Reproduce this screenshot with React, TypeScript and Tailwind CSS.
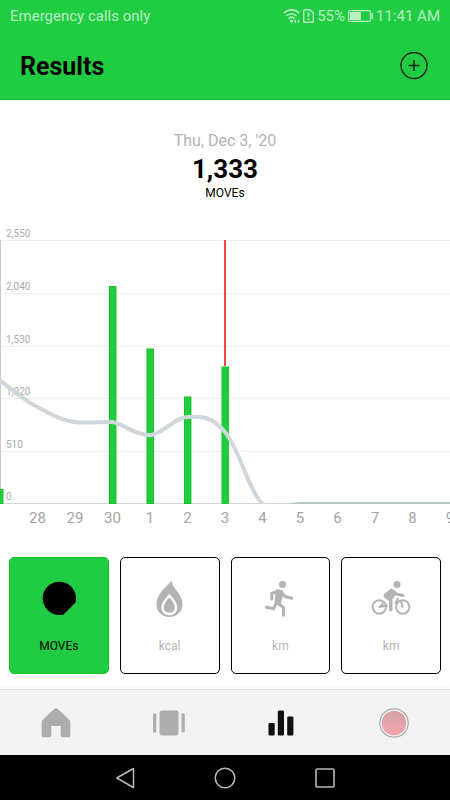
import type { ReactNode } from "react";

const gridLines = [
  { y: 240, label: "2,550" },
  { y: 293, label: "2,040" },
  { y: 346, label: "1,530" },
  { y: 398, label: "1,020" },
  { y: 451, label: "510" },
  { y: 503, label: "0" },
];

const days = ["28", "29", "30", "1", "2", "3", "4", "5", "6", "7", "8", "9"];

const bars = [
  { x: -4, top: 489 },
  { x: 109, top: 286 },
  { x: 146.5, top: 348.5 },
  { x: 184, top: 396.5 },
  { x: 221.5, top: 366.5 },
];

function StatusBar() {
  return (
    <div className="flex h-8 items-center justify-between px-[10px] text-[15px] leading-5 text-[#b9efc2]">
      <span>Emergency calls only</span>
      <div className="flex items-center gap-[3px]">
        <svg width="17" height="16" viewBox="0 0 17 16" fill="none" stroke="currentColor" strokeWidth="1.6">
          <path d="M.8 5.2C5 .7 12 .7 16.2 5.2M3.2 8C6.2 4.9 10.800 4.900 13.800 8M5.500 10.600c1.800-1.700 4.200-1.700 6 0" />
          <circle cx="8.500" cy="13" r="1.500" fill="currentColor" stroke="none" />
          <path d="M11 13.200l1.900-2.200v4.400zM16.700 13.200l-1.900-2.200v4.400z" fill="currentColor" stroke="none" />
        </svg>
        <svg width="11" height="14" viewBox="0 0 11 14" fill="none" stroke="currentColor" strokeWidth="1.400">
          <path d="M1.700.7h5L10.300 4v8.300a1 1 0 0 1-1 1H1.700a1 1 0 0 1-1-1V1.700a1 1 0 0 1 1-1Z" />
          <path d="M5.500 3.400v4.400M5.500 9.200v1.700" strokeWidth="1.800" />
        </svg>
        <span>55%</span>
        <svg width="25" height="12" viewBox="0 0 25 12" fill="none">
          <rect x=".6" y=".6" width="21.800" height="10.800" rx="1" stroke="currentColor" strokeWidth="1.200" />
          <path d="M2 2h11v8H2zM23.500 3H25v6h-1.500z" fill="currentColor" />
        </svg>
        <span>11:41 AM</span>
      </div>
    </div>
  );
}

function ActivityChart() {
  return (
    <svg viewBox="0 220 450 315" className="block w-full" role="img" aria-label="MOVEs per day">
      <defs>
        <clipPath id="plot">
          <rect x="0" y="236" width="450" height="268" />
        </clipPath>
      </defs>
      {gridLines.map((line) => (
        <g key={line.label}>
          <rect x="0" y={line.y} width="450" height="1" fill={line.label === "0" ? "#d4d4d4" : "#f0f0f0"} />
          <text x="6" y={line.y - 3} fontSize="10" fill="#ababab">
            {line.label}
          </text>
        </g>
      ))}
      <rect x="0" y="240" width="1" height="264" fill="#cccccc" />
      {bars.map((bar) => (
        <g key={bar.x}>
          <rect x={bar.x} y={bar.top} width="7.400" height={504 - bar.top} fill="#10c41c" />
          <rect x={bar.x + 1} y={bar.top + 1} width="5.400" height={502 - bar.top} fill="#20cc42" />
        </g>
      ))}
      <rect x="224" y="240" width="2" height="126" fill="#fb4545" />
      <g clipPath="url(#plot)" fill="none" stroke="#ced7db" strokeWidth="4">
        <path d="M-2 379C12 389 25 401 37.500 407C50 414 63 421 78 422.500C91 423 100 421.500 112.500 422C126 425 134 435 150 435.200C164 434 174 417 187.500 417C203 416 212 417 225 432C240 450 247 487 262 503.500C270 508 282 508 293 504.500" />
        <path d="M292 504.500Q296 503.500 303 503.500H450" stroke="#b7c4c6" strokeWidth="3" />
      </g>
      {days.map((day, i) => (
        <text key={day} x={37.5 * (i + 1)} y="522.500" fontSize="15" textAnchor="middle" fill="#a4a4a4">
          {day}
        </text>
      ))}
    </svg>
  );
}

function MetricCard({ label, selected = false, children }: { label: string; selected?: boolean; children: ReactNode }) {
  return (
    <button
      type="button"
      aria-pressed={selected}
      className={
        selected
          ? "flex h-[117px] flex-1 flex-col items-center rounded-[5px] border border-[#10c41c] bg-[#20cc42] pt-5 text-black"
          : "flex h-[117px] flex-1 flex-col items-center rounded-[5px] border border-black bg-white pt-5 text-[#b3b3b3]"
      }
    >
      {children}
      <span className="mt-5 text-xs leading-4">{label}</span>
    </button>
  );
}

function TabButton({ label, children }: { label: string; children: ReactNode }) {
  return (
    <button type="button" aria-label={label} className="flex items-center justify-center">
      {children}
    </button>
  );
}

export default function App() {
  return (
    <div className="flex min-h-screen flex-col bg-white font-[Roboto,'Liberation_Sans',sans-serif]">
      <header className="border-b border-[#10bf27] bg-[#20cc42]">
        <StatusBar />
        <div className="flex h-[67px] items-center justify-between px-5">
          <h1 className="pt-[2px] text-[25px] font-bold leading-8">Results</h1>
          <button type="button" aria-label="Add result" className="mr-[2px]">
            <svg width="28" height="28" viewBox="0 0 28 28" fill="none" stroke="#04200a" strokeWidth="1.400">
              <circle cx="14" cy="13.500" r="13" />
              <path d="M14 8v11M8.500 13.500h11" />
            </svg>
          </button>
        </div>
      </header>

      <main className="flex grow flex-col">
        <section className="flex flex-col items-center pt-[31px] text-center">
          <p className="text-base leading-5 text-[#b3b3b3]">Thu, Dec 3, '20</p>
          <p className="text-[26px] font-bold leading-9">1,333</p>
          <p className="text-xs leading-3">MOVEs</p>
        </section>

        <section className="pt-[21px]">
          <ActivityChart />
        </section>

        <section className="flex gap-[11px] px-[9px] pt-[22px] pb-[15px]">
          <MetricCard label="MOVEs" selected>
            <svg width="40" height="40" viewBox="0 0 40 40" fill="currentColor">
              <path d="M36.500 24.500 24.500 36.500A16.700 16.700 0 1 1 36.500 24.500Z" />
            </svg>
          </MetricCard>
          <MetricCard label="kcal">
            <svg width="40" height="40" viewBox="0 0 40 40" fill="currentColor">
              <path d="M22 2.500C21.500 11.500 32.500 14 32.500 26.500C32.500 34 26.500 39 19.500 39S6.500 34 6.500 26.500C6.500 18 13.500 10.500 22 2.500Z" />
              <path d="M19.300 17.500C22.500 21 26 24.500 26 29.500C26 33.500 23 36 19.300 36S12.500 33.500 12.500 29.500C12.500 24.500 16.500 21 19.300 17.500Z" stroke="white" strokeWidth="2.400" />
            </svg>
          </MetricCard>
          <MetricCard label="km">
            <svg width="40" height="40" viewBox="0 0 40 40" fill="none" stroke="currentColor" strokeWidth="3" strokeLinecap="round" strokeLinejoin="round">
              <circle cx="22.500" cy="6.500" r="3.500" fill="currentColor" stroke="none" />
              <path d="M19 13 11.800 15.300V21M21 14 25 18.500 31.800 20.300" />
              <path d="M16.500 12.500 22 13 21.500 20 19 26.500 15.500 25Z" fill="currentColor" strokeWidth="2" />
              <path d="M16.800 24 13.500 30.800 6.500 29.300M18.500 25.500 23.500 29.500V37.300" />
            </svg>
          </MetricCard>
          <MetricCard label="km">
            <svg width="40" height="40" viewBox="0 0 40 40" fill="none" stroke="currentColor" strokeLinecap="round" strokeLinejoin="round">
              <circle cx="26" cy="6.500" r="3.500" fill="currentColor" stroke="none" />
              <circle cx="8.300" cy="29" r="6.700" strokeWidth="1.900" />
              <circle cx="31.700" cy="29" r="6.700" strokeWidth="1.900" />
              <path d="M20.500 11.500 13.500 17 16 20 21 20.500 24 16Z" fill="currentColor" strokeWidth="2" />
              <path d="M21 12.500 26 16.300 32 17.500" strokeWidth="3" />
              <path d="M14.500 18.500 19.800 22.500V31.800" strokeWidth="3.400" />
              <path d="M13 24.500 8.500 29 16 27.500M24.500 25 27 20.500M30 23l1.500 6" strokeWidth="2" />
            </svg>
          </MetricCard>
        </section>
      </main>

      <nav aria-label="Main" className="grid h-[66px] grid-cols-4 border-t border-[#e2e2e2] bg-[#f3f3f3] text-[#adadad] shadow-[0_-1px_4px_rgba(0,0,0,0.05)]">
        <TabButton label="Home">
          <svg width="30" height="30" viewBox="0 0 30 30" fill="currentColor">
            <path d="M12.800 1.300Q15-.8 17.200 1.300L28.500 12Q29.300 12.900 29.300 14V27.700Q29.300 29.300 27.700 29.300H21.300Q19.700 29.300 19.700 27.700V18H10.300V27.700Q10.300 29.300 8.700 29.300H2.300Q.7 29.300.7 27.700V14Q.7 12.900 1.500 12Z" />
          </svg>
        </TabButton>
        <TabButton label="Workouts">
          <svg width="32" height="26" viewBox="0 0 32 26" fill="currentColor">
            <rect x="0" y="3.500" width="3.300" height="19" rx="1" />
            <rect x="6.500" y=".5" width="19" height="25" rx="2.500" />
            <rect x="28.500" y="3.500" width="3.300" height="19" rx="1" />
          </svg>
        </TabButton>
        <TabButton label="Results">
          <svg width="26" height="26" viewBox="0 0 26 26" fill="#101010">
            <rect x=".5" y="13" width="6.200" height="12.500" rx="1.200" />
            <rect x="9.800" y=".5" width="6.200" height="25" rx="1.200" />
            <rect x="19.200" y="6.500" width="6.200" height="19" rx="1.200" />
          </svg>
        </TabButton>
        <TabButton label="Record">
          <svg width="30" height="30" viewBox="0 0 30 30">
            <defs>
              <linearGradient id="record" x1="0" y1="0" x2="0" y2="1">
                <stop offset="0" stopColor="#d3a4a6" />
                <stop offset="1" stopColor="#f2a4aa" />
              </linearGradient>
            </defs>
            <circle cx="15" cy="15" r="14.200" fill="#fafafa" stroke="#a9a9a9" strokeWidth="1.200" />
            <circle cx="15" cy="15" r="12.300" fill="url(#record)" />
          </svg>
        </TabButton>
      </nav>

      <nav aria-label="System" className="flex h-[45px] items-center justify-center gap-[76px] bg-black text-[#b8b8b8]">
        <button type="button" aria-label="Back">
          <svg width="24" height="24" viewBox="0 0 24 24" fill="none" stroke="currentColor" strokeWidth="1.500" strokeLinejoin="round">
            <path d="M3.700 12 20.500 2.500V21.500Z" />
          </svg>
        </button>
        <button type="button" aria-label="Home screen">
          <svg width="24" height="24" viewBox="0 0 24 24" fill="none" stroke="currentColor" strokeWidth="1.500">
            <circle cx="12" cy="12" r="9.800" />
          </svg>
        </button>
        <button type="button" aria-label="Recent apps">
          <svg width="24" height="24" viewBox="0 0 24 24" fill="none" stroke="currentColor" strokeWidth="1.600">
            <rect x="3" y="3" width="18" height="18" rx="1" />
          </svg>
        </button>
      </nav>
    </div>
  );
}
